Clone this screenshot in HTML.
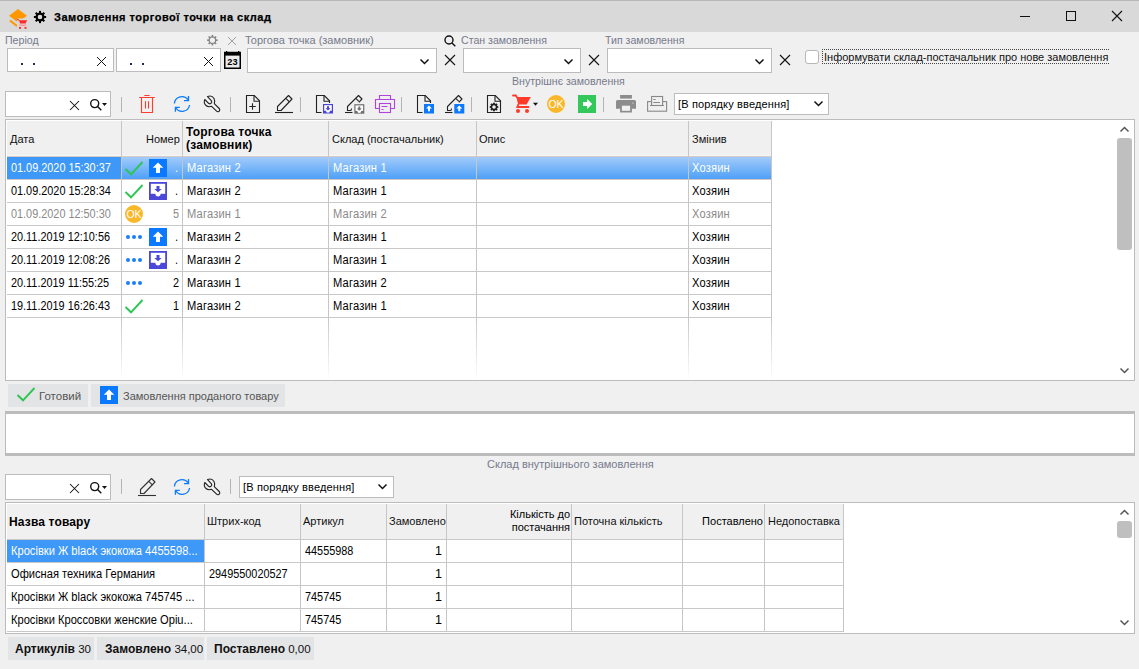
<!DOCTYPE html>
<html><head><meta charset="utf-8"><style>
*{box-sizing:border-box;margin:0;padding:0}
html,body{width:1139px;height:669px;overflow:hidden;background:#f0f0f0;font-family:"Liberation Sans",sans-serif;font-size:11px;color:#000}
.a{position:absolute}
.t{position:absolute;white-space:nowrap;line-height:13px}
.box{position:absolute;background:#fff;border:1px solid #bcbcbc}
.lbl{color:#7a8196;font-size:11px}
.sep{position:absolute;width:1px;height:15px;background:#b4b4b4}
.vl{position:absolute;width:1px;background:#d2d2d2}
.hl{position:absolute;height:1px;background:#d2d2d2}
svg{position:absolute;overflow:visible}
.g{font-size:11.5px;letter-spacing:-0.2px}
</style></head><body>
<div class="a" style="left:0px;top:0px;width:1139px;height:32px;background:#d9d9d9;border-top:1px solid #b8b8b8"></div>
<svg style="left:6px;top:6px" width="24" height="24" viewBox="0 0 24 24"><path d="M12 3L21 9.7L12 16.4L3 9.7Z" fill="#ff9800"/><path d="M3.2 15.2L4.6 13.8L11.5 19L10.6 21Z" fill="#ff9800"/><rect x="11" y="12.5" width="11" height="11" fill="#d9d9d9"/><path d="M11.3 13.3L13 14.2" stroke="#ff2a2a" stroke-width="1.2"/><path d="M13 14.2H21.2L19.6 17.4H14Z" fill="#ff2a2a"/><rect x="13.2" y="18.4" width="7" height="1.7" fill="#ff9a9a"/><rect x="13" y="21" width="2" height="1.8" fill="#ff2a2a"/><rect x="18.5" y="21" width="2" height="1.8" fill="#ff2a2a"/></svg>
<svg style="left:33px;top:10px" width="14" height="14" viewBox="0 0 14 14"><g transform="translate(7,7)"><circle r="3.4" fill="none" stroke="#000" stroke-width="2.2"/><rect x="-1" y="-6.1" width="2" height="2.6" fill="#000" transform="rotate(0)"/><rect x="-1" y="-6.1" width="2" height="2.6" fill="#000" transform="rotate(45)"/><rect x="-1" y="-6.1" width="2" height="2.6" fill="#000" transform="rotate(90)"/><rect x="-1" y="-6.1" width="2" height="2.6" fill="#000" transform="rotate(135)"/><rect x="-1" y="-6.1" width="2" height="2.6" fill="#000" transform="rotate(180)"/><rect x="-1" y="-6.1" width="2" height="2.6" fill="#000" transform="rotate(225)"/><rect x="-1" y="-6.1" width="2" height="2.6" fill="#000" transform="rotate(270)"/><rect x="-1" y="-6.1" width="2" height="2.6" fill="#000" transform="rotate(315)"/></g></svg>
<div class="t" style="left:54px;top:11px;font-weight:bold;font-size:11px;letter-spacing:0.5px;color:#000;-webkit-text-stroke:0.25px #000">Замовлення торгової точки на склад</div>
<div class="a" style="left:1020px;top:16px;width:10px;height:1px;background:#111"></div>
<div class="a" style="left:1066px;top:11px;width:10px;height:10px;border:1px solid #111"></div>
<svg style="left:1112px;top:11px" width="10" height="10" viewBox="0 0 10 10"><path d="M0 0L10 10M10 0L0 10" stroke="#111" stroke-width="1.1"/></svg>
<div class="t" style="left:5px;top:34px;color:#767a8c;font-size:10.6px">Період</div>
<div class="box" style="left:7px;top:48px;width:107px;height:24px"></div>
<div class="box" style="left:116px;top:48px;width:105px;height:24px"></div>
<svg style="left:97px;top:57px" width="9" height="9" viewBox="0 0 9 9"><path d="M0 0L9 9M9 0L0 9" stroke="#111" stroke-width="1"/></svg>
<svg style="left:204px;top:57px" width="9" height="9" viewBox="0 0 9 9"><path d="M0 0L9 9M9 0L0 9" stroke="#111" stroke-width="1"/></svg>
<div class="a" style="left:21px;top:63px;width:2px;height:2px;background:#1c2a50"></div>
<div class="a" style="left:33px;top:63px;width:2px;height:2px;background:#1c2a50"></div>
<div class="a" style="left:130px;top:63px;width:2px;height:2px;background:#1c2a50"></div>
<div class="a" style="left:142px;top:63px;width:2px;height:2px;background:#1c2a50"></div>
<svg style="left:207px;top:35px" width="11" height="11" viewBox="0 0 11 11"><g transform="translate(5.4,5.2)"><circle r="3.3" fill="none" stroke="#858585" stroke-width="1.3"/><rect x="-0.8" y="-5.3" width="1.6" height="2.4" fill="#858585" transform="rotate(0)"/><rect x="-0.8" y="-5.3" width="1.6" height="2.4" fill="#858585" transform="rotate(45)"/><rect x="-0.8" y="-5.3" width="1.6" height="2.4" fill="#858585" transform="rotate(90)"/><rect x="-0.8" y="-5.3" width="1.6" height="2.4" fill="#858585" transform="rotate(135)"/><rect x="-0.8" y="-5.3" width="1.6" height="2.4" fill="#858585" transform="rotate(180)"/><rect x="-0.8" y="-5.3" width="1.6" height="2.4" fill="#858585" transform="rotate(225)"/><rect x="-0.8" y="-5.3" width="1.6" height="2.4" fill="#858585" transform="rotate(270)"/><rect x="-0.8" y="-5.3" width="1.6" height="2.4" fill="#858585" transform="rotate(315)"/></g></svg>
<svg style="left:228px;top:37px" width="8" height="8" viewBox="0 0 8 8"><path d="M0 0L8 8M8 0L0 8" stroke="#a0a0a0" stroke-width="1"/></svg>
<svg style="left:224px;top:51px" width="17" height="18" viewBox="0 0 17 18"><rect x="0.75" y="1.5" width="15.5" height="15.75" fill="#ececec" stroke="#000" stroke-width="1.5"/><rect x="0" y="1" width="17" height="3.6" fill="#000"/><rect x="16" y="16" width="1" height="2" fill="#000"/><rect x="2" y="0" width="1.3" height="2" fill="#000"/><rect x="14" y="0" width="1.3" height="2" fill="#000"/><text x="8.6" y="14.3" font-size="9.2" font-weight="bold" text-anchor="middle" font-family="Liberation Sans" fill="#000" letter-spacing="0.3">23</text></svg>
<div class="t" style="left:245px;top:34px;color:#767a8c">Торгова точка (замовник)</div>
<div class="box" style="left:247px;top:48px;width:190px;height:25px"></div>
<svg style="left:420px;top:59px" width="9" height="5" viewBox="0 0 9 5"><path d="M0.5 0.5L4.5 4.5L8.5 0.5" fill="none" stroke="#111" stroke-width="1.5"/></svg>
<svg style="left:445px;top:55px" width="10" height="10" viewBox="0 0 10 10"><path d="M0 0L10 10M10 0L0 10" stroke="#111" stroke-width="1.1"/></svg>
<svg style="left:444px;top:35px" width="12" height="12" viewBox="0 0 12 12"><circle cx="5" cy="5" r="4" fill="none" stroke="#111" stroke-width="1.4"/><path d="M8 8L11.3 11.3" stroke="#111" stroke-width="1.4"/></svg>
<div class="t" style="left:461px;top:34px;color:#767a8c;font-size:10.6px">Стан замовлення</div>
<div class="box" style="left:463px;top:48px;width:118px;height:25px"></div>
<svg style="left:564px;top:59px" width="9" height="5" viewBox="0 0 9 5"><path d="M0.5 0.5L4.5 4.5L8.5 0.5" fill="none" stroke="#111" stroke-width="1.5"/></svg>
<svg style="left:589px;top:55px" width="10" height="10" viewBox="0 0 10 10"><path d="M0 0L10 10M10 0L0 10" stroke="#111" stroke-width="1.1"/></svg>
<div class="t" style="left:605px;top:34px;color:#767a8c;font-size:10.6px">Тип замовлення</div>
<div class="box" style="left:607px;top:48px;width:165px;height:25px"></div>
<svg style="left:755px;top:59px" width="9" height="5" viewBox="0 0 9 5"><path d="M0.5 0.5L4.5 4.5L8.5 0.5" fill="none" stroke="#111" stroke-width="1.5"/></svg>
<svg style="left:780px;top:55px" width="10" height="10" viewBox="0 0 10 10"><path d="M0 0L10 10M10 0L0 10" stroke="#111" stroke-width="1.1"/></svg>
<div class="a" style="left:805px;top:50px;width:14px;height:14px;background:#fff;border:1px solid #b8b8b8;border-radius:3px"></div>
<div class="a" style="left:822px;top:49px;width:287px;height:15px;border:1px dotted #444;border-right:none"></div>
<div class="t" style="left:824px;top:51px;font-size:11px;color:#111;letter-spacing:0px">Інформувати склад-постачальник про нове замовлення</div>
<div class="t" style="left:512px;top:75px;color:#767a8c;font-size:10.6px">Внутрішнє замовлення</div>
<div class="box" style="left:5px;top:91px;width:106px;height:26px"></div>
<svg style="left:70px;top:101px" width="9" height="9" viewBox="0 0 9 9"><path d="M0 0L9 9M9 0L0 9" stroke="#111" stroke-width="1.05"/></svg>
<svg style="left:90px;top:100px" width="18" height="12" viewBox="0 0 18 12"><circle cx="4.7" cy="3.6" r="4" fill="none" stroke="#111" stroke-width="1.4"/><path d="M7.6 6.5L11.3 10.2" stroke="#111" stroke-width="1.4"/><path d="M12 3h5l-2.5 3z" fill="#111"/></svg>
<div class="sep" style="left:121px;top:97px"></div>
<div class="sep" style="left:230px;top:97px"></div>
<div class="sep" style="left:300px;top:97px"></div>
<div class="sep" style="left:401px;top:97px"></div>
<div class="sep" style="left:471px;top:97px"></div>
<div class="sep" style="left:603px;top:97px"></div>
<svg style="left:135px;top:92px" width="24" height="24" viewBox="0 0 24 24"><g fill="none" stroke="#ff3b30" stroke-width="1.1"><path d="M9.3 3.5H14.7M4.2 5.5H19.8"/><path d="M6.5 5.5V20.5H17.5V5.5"/><path d="M10.5 9.3V16.5M13.5 9.3V16.5"/></g></svg>
<svg style="left:170px;top:92px" width="24" height="24" viewBox="0 0 24 24"><g fill="none" stroke="#0a7cff" stroke-width="1.3"><path d="M4.4 11.5A7.6 7.6 0 0 1 18.2 8"/><path d="M18.5 4V8.6H14"/><path d="M19.6 13A7.6 7.6 0 0 1 5.8 16"/><path d="M5.4 19.8V15.4H9.8"/></g></svg>
<svg style="left:200px;top:92px" width="24" height="24" viewBox="0 0 24 24"><path d="M7.5 4.6C9.5 3.8 12.5 4 14 6.5C14.8 8 14.8 10 14.3 11.6L19.2 16.5C20.2 17.5 19.8 19 18.8 19.5C18 19.9 17.2 19.8 16.6 19.2L11.6 14.3C10 14.8 7.5 14.8 6 13.5C4.3 12 4 9.5 4.8 7.5L8.6 11.3C9.4 11.9 10.6 11.8 11.2 11.2C11.8 10.6 11.9 9.4 11.3 8.6Z" fill="none" stroke="#222" stroke-width="1.1" stroke-linejoin="round"/></svg>
<svg style="left:242px;top:92px" width="24" height="24" viewBox="0 0 24 24"><path d="M4.5 20.5V3.5H12.3L17.5 8.8V20.5Z" fill="none" stroke="#222" stroke-width="1.1"/><path d="M12 3.5V9.2H17.5" fill="none" stroke="#222" stroke-width="1.1"/><path d="M7.3 14.5H13.8M10.5 11.3V17.8" stroke="#222" stroke-width="1.1"/></svg>
<svg style="left:272px;top:92px" width="24" height="24" viewBox="0 0 24 24"><path d="M5.5 18.5V14.5L16.5 3.5L20 7L9 18.5Z" fill="none" stroke="#222" stroke-width="1.1" stroke-linejoin="round"/><path d="M13.8 6.3L17.3 9.8" stroke="#222" stroke-width="1.1"/><path d="M3 20.5H21" stroke="#222" stroke-width="1.1"/></svg>
<svg style="left:312px;top:92px" width="24" height="24" viewBox="0 0 24 24"><path d="M9.5 20.5H4.5V3.5H12.3L17.5 8.8V11" fill="none" stroke="#222" stroke-width="1.1"/><path d="M12 3.5V9.2H17.5" fill="none" stroke="#222" stroke-width="1.1"/><rect x="11" y="12" width="10" height="9.5" fill="#4a44d6"/><rect x="12.2" y="13.2" width="7.6" height="5.5" fill="#fff"/><circle cx="16.0" cy="18.7" r="2" fill="#fff"/><path d="M15.0 14.2H17.0V16.3H18.6L16.0 18.6L13.4 16.3H15.0Z" fill="#4a44d6"/></svg>
<svg style="left:342px;top:92px" width="24" height="24" viewBox="0 0 24 24"><path d="M9.5 16.5C9.5 17.8 9 18.5 8.5 18.5H5.5V14.5L16.5 3.5L20 7L16.8 10.3" fill="none" stroke="#222" stroke-width="1.1" stroke-linejoin="round"/><path d="M13.8 6.3L16.8 9.3" stroke="#222" stroke-width="1.1"/><path d="M3 20.5H10.5" stroke="#222" stroke-width="1.1"/><rect x="12.3" y="12.2" width="10" height="9.5" fill="#6f6f6f"/><rect x="13.5" y="13.399999999999999" width="7.6" height="5.5" fill="#fff"/><circle cx="17.3" cy="18.9" r="2" fill="#fff"/><path d="M16.3 14.399999999999999H18.3V16.5H19.900000000000002L17.3 18.799999999999997L14.700000000000001 16.5H16.3Z" fill="#6f6f6f"/></svg>
<svg style="left:373px;top:92px" width="24" height="24" viewBox="0 0 24 24"><g fill="none" stroke="#b044e0" stroke-width="1.1"><path d="M6.5 7.5V3.5H17.5V7.5"/><path d="M6.5 16.5H2.5V7.5H21.5V16.5H17.5"/><rect x="6.5" y="11.5" width="11" height="9"/><path d="M8.5 14.5H14.5M8.5 17.5H10.5"/></g></svg>
<svg style="left:413px;top:92px" width="24" height="24" viewBox="0 0 24 24"><path d="M9.5 20.5H4.5V3.5H12.3L17.5 8.8V11" fill="none" stroke="#222" stroke-width="1.1"/><path d="M12 3.5V9.2H17.5" fill="none" stroke="#222" stroke-width="1.1"/><rect x="11" y="12" width="10" height="9.5" fill="#0a78ff"/><path d="M16 13.5L19 16.6H17V19.2H15V16.6H13Z" fill="#fff"/></svg>
<svg style="left:442px;top:92px" width="24" height="24" viewBox="0 0 24 24"><path d="M9.5 16.5C9.5 17.8 9 18.5 8.5 18.5H5.5V14.5L16.5 3.5L20 7L16.8 10.3" fill="none" stroke="#222" stroke-width="1.1" stroke-linejoin="round"/><path d="M13.8 6.3L16.8 9.3" stroke="#222" stroke-width="1.1"/><path d="M3 20.5H10.5" stroke="#222" stroke-width="1.1"/><rect x="12.3" y="12" width="10" height="9.5" fill="#0a78ff"/><path d="M17.3 13.5L20.3 16.6H18.3V19.2H16.3V16.6H14.3Z" fill="#fff"/></svg>
<svg style="left:483px;top:92px" width="24" height="24" viewBox="0 0 24 24"><path d="M4.5 20.5V3.5H12.3L17.5 8.8V20.5Z" fill="none" stroke="#222" stroke-width="1.1"/><path d="M12 3.5V9.2H17.5" fill="none" stroke="#222" stroke-width="1.1"/><g transform="translate(11,15)"><circle r="2.6" fill="none" stroke="#222" stroke-width="1.6"/><rect x="-0.9" y="-4.3" width="1.8" height="2" fill="#222" transform="rotate(0)"/><rect x="-0.9" y="-4.3" width="1.8" height="2" fill="#222" transform="rotate(45)"/><rect x="-0.9" y="-4.3" width="1.8" height="2" fill="#222" transform="rotate(90)"/><rect x="-0.9" y="-4.3" width="1.8" height="2" fill="#222" transform="rotate(135)"/><rect x="-0.9" y="-4.3" width="1.8" height="2" fill="#222" transform="rotate(180)"/><rect x="-0.9" y="-4.3" width="1.8" height="2" fill="#222" transform="rotate(225)"/><rect x="-0.9" y="-4.3" width="1.8" height="2" fill="#222" transform="rotate(270)"/><rect x="-0.9" y="-4.3" width="1.8" height="2" fill="#222" transform="rotate(315)"/></g></svg>
<svg style="left:510px;top:92px" width="30" height="24" viewBox="0 0 30 24"><path d="M3 3.5H5.8L6.8 5" fill="none" stroke="#ff3a2a" stroke-width="1.8" stroke-linecap="round"/><path d="M6.3 5H20.8L16.6 12.6H8.2Z" fill="#ff3a2a"/><path d="M8.3 12.5L7.3 15H18.5" fill="none" stroke="#ff3a2a" stroke-width="1.8" stroke-linecap="round"/><circle cx="8" cy="19" r="2" fill="#ff3a2a"/><circle cx="17" cy="19" r="2" fill="#ff3a2a"/><path d="M23 10.8H28L25.5 13.8Z" fill="#111"/></svg>
<svg style="left:547px;top:95px" width="18" height="18" viewBox="0 0 18 18"><circle cx="9" cy="9" r="9" fill="#f9b829"/><text x="9" y="13" font-size="10.5" text-anchor="middle" font-family="Liberation Sans" fill="#fff">OK</text></svg>
<svg style="left:578px;top:95px" width="18" height="18" viewBox="0 0 18 18"><rect width="18" height="18" fill="#34c759"/><path d="M5 7H9.2V4L14.2 9L9.2 14V11H5Z" fill="#fff"/></svg>
<svg style="left:612px;top:92px" width="28" height="24" viewBox="0 0 28 24"><rect x="8.1" y="3" width="11.8" height="3.6" fill="#8c8c8c"/><path d="M4 16.8V9.6Q4 8.1 5.5 8.1H22.5Q24 8.1 24 9.6V16.8H19.9V20.6H8.1V16.8Z" fill="#8c8c8c"/><rect x="9.9" y="13.7" width="8.2" height="5.1" fill="#f0f0f0"/><rect x="20.2" y="10.4" width="1.4" height="1.4" fill="#bbb"/></svg>
<svg style="left:612px;top:92px" width="58" height="24" viewBox="0 0 58 24"><g fill="none" stroke="#888" stroke-width="1.1"><rect x="35.6" y="9.6" width="19" height="9.6"/><rect x="39.6" y="4.5" width="11" height="9" fill="#f0f0f0"/><path d="M38 13.5H52M41.3 7.5H43.6M41.3 10.5H48"/></g></svg>
<div class="box" style="left:674px;top:93px;width:155px;height:22px"></div>
<div class="t" style="left:678px;top:98px;font-size:11px;letter-spacing:0.15px">[В порядку введення]</div>
<svg style="left:814px;top:101px" width="9" height="5" viewBox="0 0 9 5"><path d="M0.5 0.5L4.5 4.5L8.5 0.5" fill="none" stroke="#111" stroke-width="1.5"/></svg>
<div class="box" style="left:5px;top:119px;width:1130px;height:262px"></div>
<div class="a" style="left:7px;top:121px;width:764px;height:35px;background:#f0f0f0"></div>
<div class="a" style="left:7px;top:155px;width:764px;height:1px;background:#f6f6f6"></div>
<div class="a" style="left:7px;top:156px;width:764px;height:1px;background:#d4ccc4"></div>
<div class="a" style="left:121px;top:121px;width:1px;height:196px;background:#c6c6c6"></div>
<div class="a" style="left:121px;top:317px;width:1px;height:62px;background:linear-gradient(#c6c6c6,#fdfdfd)"></div>
<div class="a" style="left:182px;top:121px;width:1px;height:196px;background:#c6c6c6"></div>
<div class="a" style="left:182px;top:317px;width:1px;height:62px;background:linear-gradient(#c6c6c6,#fdfdfd)"></div>
<div class="a" style="left:328px;top:121px;width:1px;height:196px;background:#c6c6c6"></div>
<div class="a" style="left:328px;top:317px;width:1px;height:62px;background:linear-gradient(#c6c6c6,#fdfdfd)"></div>
<div class="a" style="left:476px;top:121px;width:1px;height:196px;background:#c6c6c6"></div>
<div class="a" style="left:476px;top:317px;width:1px;height:62px;background:linear-gradient(#c6c6c6,#fdfdfd)"></div>
<div class="a" style="left:688px;top:121px;width:1px;height:196px;background:#c6c6c6"></div>
<div class="a" style="left:688px;top:317px;width:1px;height:62px;background:linear-gradient(#c6c6c6,#fdfdfd)"></div>
<div class="a" style="left:771px;top:121px;width:1px;height:196px;background:#c6c6c6"></div>
<div class="a" style="left:771px;top:317px;width:1px;height:62px;background:linear-gradient(#c6c6c6,#fdfdfd)"></div>
<div class="a" style="left:7px;top:179px;width:764px;height:1px;background:#c8c8c8"></div>
<div class="a" style="left:7px;top:202px;width:764px;height:1px;background:#c8c8c8"></div>
<div class="a" style="left:7px;top:225px;width:764px;height:1px;background:#c8c8c8"></div>
<div class="a" style="left:7px;top:248px;width:764px;height:1px;background:#c8c8c8"></div>
<div class="a" style="left:7px;top:271px;width:764px;height:1px;background:#c8c8c8"></div>
<div class="a" style="left:7px;top:294px;width:764px;height:1px;background:#c8c8c8"></div>
<div class="a" style="left:7px;top:317px;width:764px;height:1px;background:#c8c8c8"></div>
<div class="a" style="left:7px;top:157px;width:114px;height:22px;background:#3d98f8"></div>
<div class="a" style="left:122px;top:157px;width:60px;height:22px;background:linear-gradient(#a2cbfb,#4ea0f7)"></div>
<div class="a" style="left:183px;top:157px;width:145px;height:22px;background:linear-gradient(#a2cbfb,#4ea0f7)"></div>
<div class="a" style="left:329px;top:157px;width:147px;height:22px;background:linear-gradient(#a2cbfb,#4ea0f7)"></div>
<div class="a" style="left:477px;top:157px;width:211px;height:22px;background:linear-gradient(#a2cbfb,#4ea0f7)"></div>
<div class="a" style="left:689px;top:157px;width:82px;height:22px;background:linear-gradient(#a2cbfb,#4ea0f7)"></div>
<div class="a" style="left:7px;top:179px;width:764px;height:1px;background:#d0c8c0"></div>
<div class="t" style="left:10px;top:133px;font-size:11px;color:#111">Дата</div>
<div class="t" style="left:146px;top:133px;font-size:11px;color:#111">Номер</div>
<div class="t" style="left:186px;top:126px;font-weight:bold;font-size:12px;line-height:13px;letter-spacing:0.2px;color:#000">Торгова точка<br>(замовник)</div>
<div class="t" style="left:332px;top:133px;font-size:11px;color:#111">Склад (постачальник)</div>
<div class="t" style="left:479px;top:133px;font-size:11px;color:#111">Опис</div>
<div class="t" style="left:692px;top:133px;font-size:11px;color:#111">Змінив</div>
<div class="t" style="left:11px;top:162px;font-size:12.5px;letter-spacing:0px;transform:scaleX(0.87);transform-origin:0 0;color:#fff">01.09.2020 15:30:37</div>
<svg style="left:122px;top:157px" width="24" height="22" viewBox="0 0 24 22"><path d="M3.5 12L9 17.3L20.5 5" fill="none" stroke="#2dc653" stroke-width="1.9"/></svg>
<svg style="left:149px;top:159px" width="18" height="18" viewBox="0 0 18 18"><rect width="18" height="18" fill="#0a78ff"/><path d="M9 3.5L14.3 8.7H11V14H7V8.7H3.7Z" fill="#fff"/></svg>
<div class="t" style="left:175px;top:162px;font-size:12.5px;letter-spacing:0px;transform:scaleX(0.87);transform-origin:0 0;color:#fff">.</div>
<div class="t" style="left:187px;top:162px;font-size:12.5px;letter-spacing:0.2px;transform:scaleX(0.89);transform-origin:0 0;color:#fff">Магазин 2</div>
<div class="t" style="left:333px;top:162px;font-size:12.5px;letter-spacing:0.2px;transform:scaleX(0.89);transform-origin:0 0;color:#fff">Магазин 1</div>
<div class="t" style="left:692px;top:162px;font-size:12.5px;letter-spacing:0.2px;transform:scaleX(0.89);transform-origin:0 0;color:#fff">Хозяин</div>
<div class="t" style="left:11px;top:185px;font-size:12.5px;letter-spacing:0px;transform:scaleX(0.87);transform-origin:0 0;color:#000">01.09.2020 15:28:34</div>
<svg style="left:122px;top:180px" width="24" height="22" viewBox="0 0 24 22"><path d="M3.5 12L9 17.3L20.5 5" fill="none" stroke="#2dc653" stroke-width="1.9"/></svg>
<svg style="left:149px;top:182px" width="18" height="18" viewBox="0 0 18 18"><rect width="18" height="18" fill="#4b47d9"/><rect x="1.8" y="1.8" width="14.4" height="10" fill="#fff"/><circle cx="9" cy="11.8" r="2.6" fill="#fff"/><path d="M7.5 4H10.5V7H12.7L9 10.3L5.3 7H7.5Z" fill="#4b47d9"/></svg>
<div class="t" style="left:175px;top:185px;font-size:12.5px;letter-spacing:0px;transform:scaleX(0.87);transform-origin:0 0;color:#000">.</div>
<div class="t" style="left:187px;top:185px;font-size:12.5px;letter-spacing:0.2px;transform:scaleX(0.89);transform-origin:0 0;color:#000">Магазин 2</div>
<div class="t" style="left:333px;top:185px;font-size:12.5px;letter-spacing:0.2px;transform:scaleX(0.89);transform-origin:0 0;color:#000">Магазин 1</div>
<div class="t" style="left:692px;top:185px;font-size:12.5px;letter-spacing:0.2px;transform:scaleX(0.89);transform-origin:0 0;color:#000">Хозяин</div>
<div class="t" style="left:11px;top:208px;font-size:12.5px;letter-spacing:0px;transform:scaleX(0.87);transform-origin:0 0;color:#8a8a8a">01.09.2020 12:50:30</div>
<svg style="left:125px;top:205px" width="18" height="18" viewBox="0 0 18 18"><circle cx="9" cy="9" r="9" fill="#f9b829"/><text x="9" y="13" font-size="10.5" text-anchor="middle" font-family="Liberation Sans" fill="#fff">OK</text></svg>
<div class="t" style="left:173px;top:208px;font-size:12.5px;letter-spacing:0px;transform:scaleX(0.87);transform-origin:0 0;color:#8a8a8a">5</div>
<div class="t" style="left:187px;top:208px;font-size:12.5px;letter-spacing:0.2px;transform:scaleX(0.89);transform-origin:0 0;color:#8a8a8a">Магазин 1</div>
<div class="t" style="left:333px;top:208px;font-size:12.5px;letter-spacing:0.2px;transform:scaleX(0.89);transform-origin:0 0;color:#8a8a8a">Магазин 2</div>
<div class="t" style="left:692px;top:208px;font-size:12.5px;letter-spacing:0.2px;transform:scaleX(0.89);transform-origin:0 0;color:#8a8a8a">Хозяин</div>
<div class="t" style="left:11px;top:231px;font-size:12.5px;letter-spacing:0px;transform:scaleX(0.87);transform-origin:0 0;color:#000">20.11.2019 12:10:56</div>
<svg style="left:122px;top:226px" width="22" height="22" viewBox="0 0 22 22"><circle cx="6" cy="11" r="2" fill="#1a7ef5"/><circle cx="12" cy="11" r="2" fill="#1a7ef5"/><circle cx="18" cy="11" r="2" fill="#1a7ef5"/></svg>
<svg style="left:149px;top:228px" width="18" height="18" viewBox="0 0 18 18"><rect width="18" height="18" fill="#0a78ff"/><path d="M9 3.5L14.3 8.7H11V14H7V8.7H3.7Z" fill="#fff"/></svg>
<div class="t" style="left:175px;top:231px;font-size:12.5px;letter-spacing:0px;transform:scaleX(0.87);transform-origin:0 0;color:#000">.</div>
<div class="t" style="left:187px;top:231px;font-size:12.5px;letter-spacing:0.2px;transform:scaleX(0.89);transform-origin:0 0;color:#000">Магазин 2</div>
<div class="t" style="left:333px;top:231px;font-size:12.5px;letter-spacing:0.2px;transform:scaleX(0.89);transform-origin:0 0;color:#000">Магазин 1</div>
<div class="t" style="left:692px;top:231px;font-size:12.5px;letter-spacing:0.2px;transform:scaleX(0.89);transform-origin:0 0;color:#000">Хозяин</div>
<div class="t" style="left:11px;top:254px;font-size:12.5px;letter-spacing:0px;transform:scaleX(0.87);transform-origin:0 0;color:#000">20.11.2019 12:08:26</div>
<svg style="left:122px;top:249px" width="22" height="22" viewBox="0 0 22 22"><circle cx="6" cy="11" r="2" fill="#1a7ef5"/><circle cx="12" cy="11" r="2" fill="#1a7ef5"/><circle cx="18" cy="11" r="2" fill="#1a7ef5"/></svg>
<svg style="left:149px;top:251px" width="18" height="18" viewBox="0 0 18 18"><rect width="18" height="18" fill="#4b47d9"/><rect x="1.8" y="1.8" width="14.4" height="10" fill="#fff"/><circle cx="9" cy="11.8" r="2.6" fill="#fff"/><path d="M7.5 4H10.5V7H12.7L9 10.3L5.3 7H7.5Z" fill="#4b47d9"/></svg>
<div class="t" style="left:175px;top:254px;font-size:12.5px;letter-spacing:0px;transform:scaleX(0.87);transform-origin:0 0;color:#000">.</div>
<div class="t" style="left:187px;top:254px;font-size:12.5px;letter-spacing:0.2px;transform:scaleX(0.89);transform-origin:0 0;color:#000">Магазин 2</div>
<div class="t" style="left:333px;top:254px;font-size:12.5px;letter-spacing:0.2px;transform:scaleX(0.89);transform-origin:0 0;color:#000">Магазин 1</div>
<div class="t" style="left:692px;top:254px;font-size:12.5px;letter-spacing:0.2px;transform:scaleX(0.89);transform-origin:0 0;color:#000">Хозяин</div>
<div class="t" style="left:11px;top:277px;font-size:12.5px;letter-spacing:0px;transform:scaleX(0.87);transform-origin:0 0;color:#000">20.11.2019 11:55:25</div>
<svg style="left:122px;top:272px" width="22" height="22" viewBox="0 0 22 22"><circle cx="6" cy="11" r="2" fill="#1a7ef5"/><circle cx="12" cy="11" r="2" fill="#1a7ef5"/><circle cx="18" cy="11" r="2" fill="#1a7ef5"/></svg>
<div class="t" style="left:173px;top:277px;font-size:12.5px;letter-spacing:0px;transform:scaleX(0.87);transform-origin:0 0;color:#000">2</div>
<div class="t" style="left:187px;top:277px;font-size:12.5px;letter-spacing:0.2px;transform:scaleX(0.89);transform-origin:0 0;color:#000">Магазин 1</div>
<div class="t" style="left:333px;top:277px;font-size:12.5px;letter-spacing:0.2px;transform:scaleX(0.89);transform-origin:0 0;color:#000">Магазин 2</div>
<div class="t" style="left:692px;top:277px;font-size:12.5px;letter-spacing:0.2px;transform:scaleX(0.89);transform-origin:0 0;color:#000">Хозяин</div>
<div class="t" style="left:11px;top:300px;font-size:12.5px;letter-spacing:0px;transform:scaleX(0.87);transform-origin:0 0;color:#000">19.11.2019 16:26:43</div>
<svg style="left:122px;top:295px" width="24" height="22" viewBox="0 0 24 22"><path d="M3.5 12L9 17.3L20.5 5" fill="none" stroke="#2dc653" stroke-width="1.9"/></svg>
<div class="t" style="left:173px;top:300px;font-size:12.5px;letter-spacing:0px;transform:scaleX(0.87);transform-origin:0 0;color:#000">1</div>
<div class="t" style="left:187px;top:300px;font-size:12.5px;letter-spacing:0.2px;transform:scaleX(0.89);transform-origin:0 0;color:#000">Магазин 2</div>
<div class="t" style="left:333px;top:300px;font-size:12.5px;letter-spacing:0.2px;transform:scaleX(0.89);transform-origin:0 0;color:#000">Магазин 1</div>
<div class="t" style="left:692px;top:300px;font-size:12.5px;letter-spacing:0.2px;transform:scaleX(0.89);transform-origin:0 0;color:#000">Хозяин</div>
<svg style="left:1120px;top:127px" width="9" height="5" viewBox="0 0 9 5"><path d="M0.5 4.5L4.5 0.5L8.5 4.5" fill="none" stroke="#555" stroke-width="1.5"/></svg>
<div class="a" style="left:1117px;top:138px;width:15px;height:112px;background:#bfbfbf;border-radius:3px"></div>
<svg style="left:1120px;top:368px" width="9" height="5" viewBox="0 0 9 5"><path d="M0.5 0.5L4.5 4.5L8.5 0.5" fill="none" stroke="#555" stroke-width="1.5"/></svg>
<div class="a" style="left:8px;top:384px;width:80px;height:23px;background:#e3e4e6"></div>
<svg style="left:14px;top:383px" width="24" height="22" viewBox="0 0 24 22"><path d="M3.5 12L9 17.3L20.5 5" fill="none" stroke="#2dc653" stroke-width="1.9"/></svg>
<div class="t" style="left:39px;top:390px;font-size:11.5px;color:#555">Готовий</div>
<div class="a" style="left:91px;top:384px;width:194px;height:23px;background:#e3e4e6"></div>
<svg style="left:100px;top:386px" width="18" height="18" viewBox="0 0 18 18"><rect width="18" height="18" fill="#0a78ff"/><path d="M9 3.5L14.3 8.7H11V14H7V8.7H3.7Z" fill="#fff"/></svg>
<div class="t" style="left:123px;top:390px;font-size:11px;color:#555">Замовлення проданого товару</div>
<div class="a" style="left:5px;top:411px;width:1130px;height:45px;background:#fff;border:1px solid #bcbcbc;border-top:3px solid #bcbcbc;border-bottom:3px solid #bcbcbc"></div>
<div class="t" style="left:487px;top:458px;color:#767a8c">Склад внутрішнього замовлення</div>
<div class="box" style="left:5px;top:474px;width:106px;height:26px"></div>
<svg style="left:70px;top:484px" width="9" height="9" viewBox="0 0 9 9"><path d="M0 0L9 9M9 0L0 9" stroke="#111" stroke-width="1.05"/></svg>
<svg style="left:90px;top:483px" width="18" height="12" viewBox="0 0 18 12"><circle cx="4.7" cy="3.6" r="4" fill="none" stroke="#111" stroke-width="1.4"/><path d="M7.6 6.5L11.3 10.2" stroke="#111" stroke-width="1.4"/><path d="M12 3h5l-2.5 3z" fill="#111"/></svg>
<div class="sep" style="left:121px;top:479px"></div>
<svg style="left:135px;top:475px" width="24" height="24" viewBox="0 0 24 24"><path d="M5.5 18.5V14.5L16.5 3.5L20 7L9 18.5Z" fill="none" stroke="#333" stroke-width="1.1" stroke-linejoin="round"/><path d="M13.8 6.3L17.3 9.8" stroke="#333" stroke-width="1.1"/><path d="M3 20.5H21" stroke="#333" stroke-width="1.1"/></svg>
<svg style="left:170px;top:475px" width="24" height="24" viewBox="0 0 24 24"><g fill="none" stroke="#0a7cff" stroke-width="1.3"><path d="M4.4 11.5A7.6 7.6 0 0 1 18.2 8"/><path d="M18.5 4V8.6H14"/><path d="M19.6 13A7.6 7.6 0 0 1 5.8 16"/><path d="M5.4 19.8V15.4H9.8"/></g></svg>
<svg style="left:200px;top:475px" width="24" height="24" viewBox="0 0 24 24"><path d="M7.5 4.6C9.5 3.8 12.5 4 14 6.5C14.8 8 14.8 10 14.3 11.6L19.2 16.5C20.2 17.5 19.8 19 18.8 19.5C18 19.9 17.2 19.8 16.6 19.2L11.6 14.3C10 14.8 7.5 14.8 6 13.5C4.3 12 4 9.5 4.8 7.5L8.6 11.3C9.4 11.9 10.6 11.8 11.2 11.2C11.8 10.6 11.9 9.4 11.3 8.6Z" fill="none" stroke="#222" stroke-width="1.1" stroke-linejoin="round"/></svg>
<div class="sep" style="left:230px;top:479px"></div>
<div class="box" style="left:239px;top:476px;width:155px;height:22px"></div>
<div class="t" style="left:243px;top:481px;font-size:11px;letter-spacing:0.15px">[В порядку введення]</div>
<svg style="left:378px;top:484px" width="9" height="5" viewBox="0 0 9 5"><path d="M0.5 0.5L4.5 4.5L8.5 0.5" fill="none" stroke="#111" stroke-width="1.5"/></svg>
<div class="box" style="left:5px;top:502px;width:1130px;height:132px"></div>
<div class="a" style="left:7px;top:504px;width:837px;height:35px;background:#f0f0f0"></div>
<div class="a" style="left:204px;top:504px;width:1px;height:128px;background:#c6c6c6"></div>
<div class="a" style="left:300px;top:504px;width:1px;height:128px;background:#c6c6c6"></div>
<div class="a" style="left:386px;top:504px;width:1px;height:128px;background:#c6c6c6"></div>
<div class="a" style="left:446px;top:504px;width:1px;height:128px;background:#c6c6c6"></div>
<div class="a" style="left:571px;top:504px;width:1px;height:128px;background:#c6c6c6"></div>
<div class="a" style="left:682px;top:504px;width:1px;height:128px;background:#c6c6c6"></div>
<div class="a" style="left:764px;top:504px;width:1px;height:128px;background:#c6c6c6"></div>
<div class="a" style="left:843px;top:504px;width:1px;height:128px;background:#c6c6c6"></div>
<div class="a" style="left:7px;top:539px;width:837px;height:1px;background:#c8c8c8"></div>
<div class="a" style="left:7px;top:562px;width:837px;height:1px;background:#c8c8c8"></div>
<div class="a" style="left:7px;top:585px;width:837px;height:1px;background:#c8c8c8"></div>
<div class="a" style="left:7px;top:608px;width:837px;height:1px;background:#c8c8c8"></div>
<div class="a" style="left:7px;top:631px;width:837px;height:1px;background:#c8c8c8"></div>
<div class="a" style="left:7px;top:540px;width:197px;height:22px;background:#3d98f8"></div>
<div class="t" style="left:9px;top:516px;font-weight:bold;font-size:12px;letter-spacing:0.15px">Назва товару</div>
<div class="t" style="left:207px;top:515px;font-size:11px;color:#111">Штрих-код</div>
<div class="t" style="left:303px;top:515px;font-size:11px;color:#111">Артикул</div>
<div class="t" style="left:389px;top:515px;font-size:11px;color:#111">Замовлено</div>
<div class="t" style="left:447px;top:508px;width:123px;text-align:right;font-size:11px;line-height:13px">Кількість до<br>постачання</div>
<div class="t" style="left:574px;top:515px;font-size:11px;color:#111">Поточна кількість</div>
<div class="t" style="left:683px;top:515px;width:80px;text-align:right;font-size:11px">Поставлено</div>
<div class="t" style="left:768px;top:515px;font-size:11px;color:#111">Недопоставка</div>
<div class="t" style="left:11px;top:545px;font-size:12.5px;transform:scaleX(0.89);transform-origin:0 0;color:#fff">Кросівки Ж black экокожа 4455598...</div>
<div class="t" style="left:209px;top:545px;font-size:12.5px;transform:scaleX(0.87);transform-origin:0 0"></div>
<div class="t" style="left:305px;top:545px;font-size:12.5px;transform:scaleX(0.87);transform-origin:0 0">44555988</div>
<div class="t" style="left:387px;top:545px;width:55px;text-align:right;font-size:12.5px">1</div>
<div class="t" style="left:11px;top:568px;font-size:12.5px;transform:scaleX(0.89);transform-origin:0 0;color:#000">Офисная техника Германия</div>
<div class="t" style="left:209px;top:568px;font-size:12.5px;transform:scaleX(0.87);transform-origin:0 0">2949550020527</div>
<div class="t" style="left:305px;top:568px;font-size:12.5px;transform:scaleX(0.87);transform-origin:0 0"></div>
<div class="t" style="left:387px;top:568px;width:55px;text-align:right;font-size:12.5px">1</div>
<div class="t" style="left:11px;top:591px;font-size:12.5px;transform:scaleX(0.89);transform-origin:0 0;color:#000">Кросівки Ж black экокожа 745745 ...</div>
<div class="t" style="left:209px;top:591px;font-size:12.5px;transform:scaleX(0.87);transform-origin:0 0"></div>
<div class="t" style="left:305px;top:591px;font-size:12.5px;transform:scaleX(0.87);transform-origin:0 0">745745</div>
<div class="t" style="left:387px;top:591px;width:55px;text-align:right;font-size:12.5px">1</div>
<div class="t" style="left:11px;top:614px;font-size:12.5px;transform:scaleX(0.89);transform-origin:0 0;color:#000">Кросівки Кроссовки женские Opiu...</div>
<div class="t" style="left:209px;top:614px;font-size:12.5px;transform:scaleX(0.87);transform-origin:0 0"></div>
<div class="t" style="left:305px;top:614px;font-size:12.5px;transform:scaleX(0.87);transform-origin:0 0">745745</div>
<div class="t" style="left:387px;top:614px;width:55px;text-align:right;font-size:12.5px">1</div>
<svg style="left:1120px;top:510px" width="9" height="5" viewBox="0 0 9 5"><path d="M0.5 4.5L4.5 0.5L8.5 4.5" fill="none" stroke="#555" stroke-width="1.5"/></svg>
<div class="a" style="left:1117px;top:521px;width:15px;height:17px;background:#bfbfbf;border-radius:3px"></div>
<svg style="left:1120px;top:620px" width="9" height="5" viewBox="0 0 9 5"><path d="M0.5 0.5L4.5 4.5L8.5 0.5" fill="none" stroke="#555" stroke-width="1.5"/></svg>
<div class="a" style="left:8px;top:637px;width:86px;height:23px;background:#e3e4e6"></div>
<div class="t" style="left:15px;top:643px;font-size:11.5px;color:#111"><b style="font-size:12px">Артикулів</b> 30</div>
<div class="a" style="left:97px;top:637px;width:107px;height:23px;background:#e3e4e6"></div>
<div class="t" style="left:105px;top:643px;font-size:11.5px;color:#111"><b style="font-size:12px">Замовлено</b> 34,00</div>
<div class="a" style="left:207px;top:637px;width:107px;height:23px;background:#e3e4e6"></div>
<div class="t" style="left:214px;top:643px;font-size:11.5px;color:#111"><b style="font-size:12px">Поставлено</b> 0,00</div>
</body></html>
